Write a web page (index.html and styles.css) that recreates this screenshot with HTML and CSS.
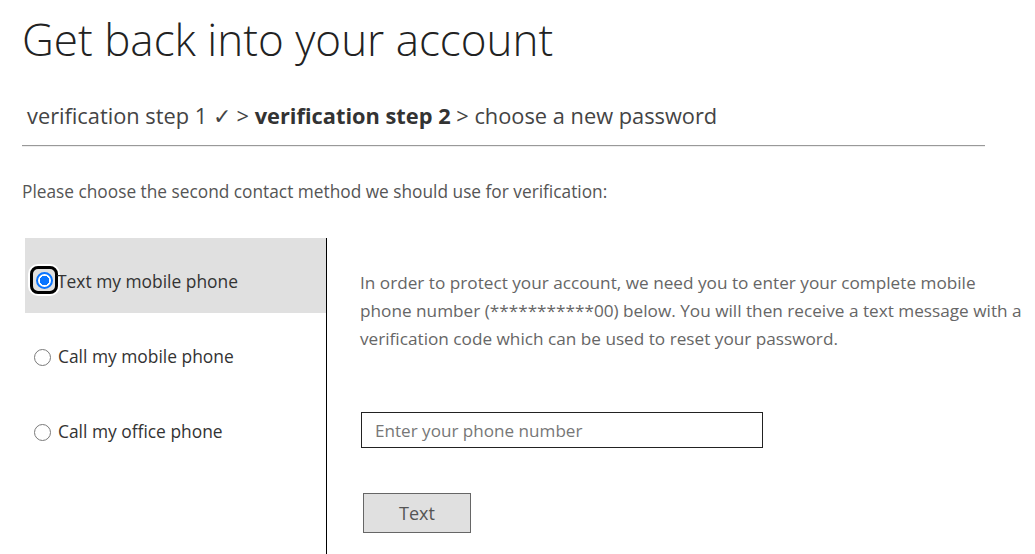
FILE: index.html
```html
<!DOCTYPE html>
<html lang="en">
<head>
    <meta charset="UTF-8">
    <meta name="viewport" content="width=device-width, initial-scale=1.0">
    <title>Get back into your account</title>
    <link rel="stylesheet" href="styles.css">
</head>
<body>
    <div id="root">
        <h1 class="title">Get back into your account</h1>
        <div class="steps">
            verification step 1 &#10003; &gt; <strong>verification step 2</strong> &gt; choose a new password
        </div>
        <hr class="divider">
        <p class="intro">Please choose the second contact method we should use for verification:</p>

        <div class="methods">
            <div class="options">
                <label class="option selected">
                    <span class="focus-ring"><input type="radio" name="method" value="text" checked></span>Text my mobile phone
                </label>
                <label class="option">
                    <input type="radio" name="method" value="call">Call my mobile phone
                </label>
                <label class="option">
                    <input type="radio" name="method" value="office">Call my office phone
                </label>
            </div>
            <div class="detail">
                <p class="info">In order to protect your account, we need you to enter your complete mobile phone number (***********00) below. You will then receive a text message with a verification code which can be used to reset your password.</p>
                <input type="text" class="phone" placeholder="Enter your phone number">
                <button type="button" class="send">Text</button>
            </div>
        </div>
    </div>
</body>
</html>
```

FILE: styles.css
```css
/* Basic Styles */
body {
    font-family: "Open Sans", "Noto Sans", sans-serif;
    background-color: #fff;
    color: #333;
    margin: 0;
}
#root {
    padding-left: 22px;
}

/* Header */
.title {
    font-size: 44px;
    font-weight: 300;
    color: #222;
    margin: 0;
    padding-top: 12px;
    line-height: 54px;
}
.steps {
    font-size: 21.8px;
    color: #444;
    margin-top: 35px;
    padding-left: 5px;
    line-height: 30px;
}
.steps strong {
    color: #333;
}
.divider {
    width: 963px;
    margin: 14px 0 0 0;
    border: none;
    border-top: 1px solid #999;
    border-bottom: 1px solid #eee;
}
.intro {
    font-size: 17.3px;
    color: #555;
    margin: 33px 0 0 0;
    line-height: 24px;
}

/* Method picker */
.methods {
    display: flex;
    margin-top: 34px;
    height: 320px;
}
.options {
    width: 301px;
    margin-left: 3px;
    border-right: 1px solid #000;
}
.option {
    display: flex;
    align-items: center;
    height: 75px;
    box-sizing: border-box;
    padding: 30px 0 19px 9px;
    font-size: 17.4px;
    color: #333;
}
.option.selected {
    background-color: #e0e0e0;
    padding-left: 5px;
}
.option input {
    appearance: none;
    width: 17px;
    height: 17px;
    margin: 0 7px -2px 0;
    border: 1.5px solid #7a7a7a;
    border-radius: 50%;
    background-color: #fff;
    box-sizing: border-box;
    flex-shrink: 0;
}
.option input:checked {
    border: 2px solid #0a75ff;
    background: radial-gradient(circle, #0a75ff 0 4.5px, #fff 5px);
}
.focus-ring {
    display: flex;
    align-items: center;
    justify-content: center;
    width: 28px;
    height: 28px;
    box-sizing: border-box;
    border: 3px solid #000;
    border-radius: 8px;
    box-shadow: 0 0 0 2px #fff;
    margin: -2px -1px 0 0;
}
.focus-ring input {
    margin: 0;
}

.detail {
    flex: 1;
    padding: 31px 12px 0 33px;
}
.info {
    font-size: 17.2px;
    line-height: 28px;
    color: #666;
    margin: 0;
}
.phone {
    display: block;
    width: 402px;
    height: 36px;
    box-sizing: border-box;
    margin: 59px 0 0 1px;
    padding: 0 13px;
    font-family: inherit;
    font-size: 17.1px;
    border: 1px solid #222;
    border-radius: 0;
    outline: none;
}
.phone::placeholder {
    color: #777;
}
.send {
    display: block;
    margin: 45px 0 0 3px;
    width: 108px;
    height: 40px;
    font-family: inherit;
    font-size: 18px;
    color: #555;
    background-color: #e0e0e0;
    border: 1px solid #666;
    border-radius: 0;
}
```
